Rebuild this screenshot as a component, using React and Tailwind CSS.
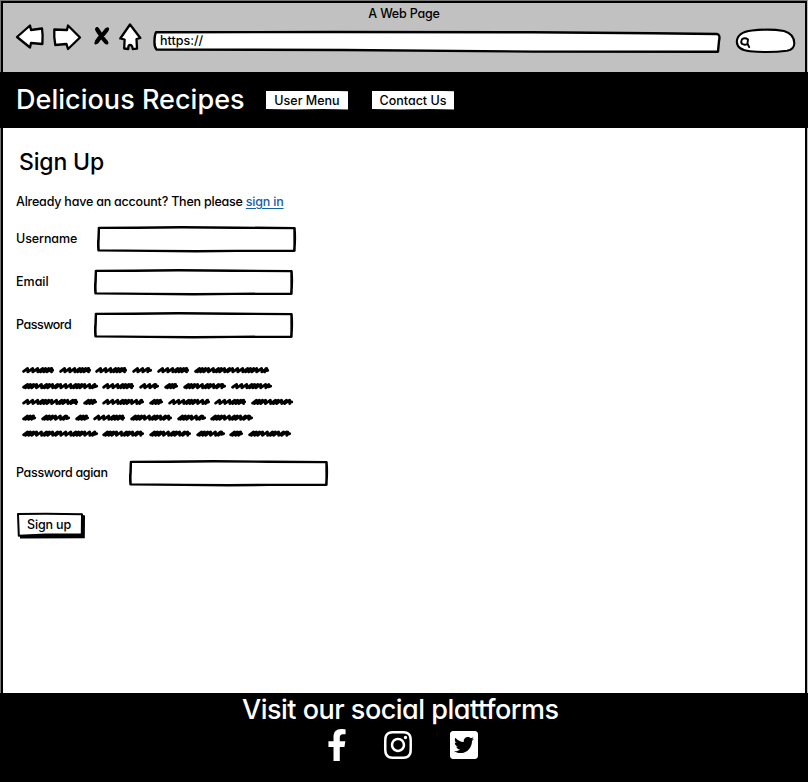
import { FaFacebookF, FaInstagram, FaTwitterSquare } from "react-icons/fa";

const LINES = [
  [[0, 32, 0], [37, 69, 0], [73, 105, 0], [110, 130, 0], [135, 167, 0], [172, 247, 1]],
  [[0, 76, 1], [80, 112, 0], [117, 137, 0], [142, 156, 1], [161, 204, 1], [209, 250, 0]],
  [[0, 56, 0], [61, 75, 1], [80, 122, 0], [127, 141, 1], [146, 188, 0], [192, 224, 0], [229, 271, 1]],
  [[0, 14, 1], [19, 48, 1], [53, 67, 1], [71, 103, 0], [108, 150, 1], [155, 184, 1], [188, 231, 1]],
  [[0, 76, 1], [80, 122, 1], [127, 169, 1], [174, 203, 1], [207, 221, 1], [226, 269, 1]],
];

const STEPS = [5.2, 5, 5, 2.8, 3.2, 3, 4.8, 5.2, 2.8, 3.2, 5, 3];

function scribble([start, end, dense], y) {
  let x = start + 1.6;
  let i = dense ? 3 : 0;
  let d = `M${x} ${y + 1}`;
  while (x < end - 6) {
    const step = STEPS[i % STEPS.length];
    d += `L${(x + 4).toFixed(1)} ${(y - 1.9).toFixed(1)}L${(x + step - 1).toFixed(1)} ${(y + 1.5).toFixed(1)}`;
    x += step;
    i += 1;
  }
  return `${d}L${end - 3.2} ${y - 1.7}L${end - 3.6} ${y + 0.6}L${end - 1.3} ${y - 0.1}`;
}

function Field({ label, gap }) {
  return (
    <label className="flex h-[43px] items-center">
      <span className={gap}>{label}</span>
      <svg width="200" height="28" viewBox="0.5 0.7 200 28" fill="none" stroke="#000" strokeLinejoin="round" strokeLinecap="round">
        <path strokeWidth="2.4" d="M2.4 2.6L40 2.4L85 2L140 2.4L198 2.8Q199 14 197.7 25.4L140 25.6L100 26L55 25.6L2 25.1Q1.3 18 2 13Z" />
        <path strokeWidth="1.4" d="M2.8 2.8Q1.9 12 2.3 24.6M198 2.8Q197.2 13 198.3 25.6" />
      </svg>
    </label>
  );
}

function NavButton({ children }) {
  return (
    <button className="h-[19px] w-[82px] bg-white text-[12.5px] font-medium leading-[19px] text-black [clip-path:polygon(0_0,30%_2%,60%_0,100%_4%,100%_100%,70%_97%,35%_100%,0_98%)]">
      {children}
    </button>
  );
}

export default function App() {
  return (
    <div className="flex h-[782px] w-[808px] flex-col overflow-hidden bg-white font-['Inter','Liberation_Sans',sans-serif] text-[12.5px] font-medium text-black [font-feature-settings:'cv11']">
      <header className="h-[72px] border-t border-r border-l border-t-[#777] border-r-[#bbb] border-l-[#777]">
        <div className="h-[71px] border-2 border-b-0 border-black bg-[#c1c1c1]">
          <div className="h-[20px] pt-[1px] text-center leading-[20px] tracking-[-0.2px]">A Web Page</div>
          <div className="flex h-[38px] items-center">
            <svg className="ml-[11px] shrink-0" width="102" height="38" viewBox="14 23 102 38" fill="#fff" stroke="#000" strokeWidth="2.3" strokeLinejoin="round" strokeLinecap="round" aria-label="Back, forward, stop">
              <path d="M17 37L30 25.5L31 30L42 28.5L42.6 35L42.4 44L31 43L30 47.5Z" />
              <path d="M54.3 29.5L67 30L68 25.5L80 37.5L68 49L66.5 44L55.3 45Q53.8 37 54.3 29.5Z" />
              <g fill="none" strokeWidth="3">
                <path d="M96.8 28.6Q99 35 107 43M107.6 28.8Q101 35 95.8 43" />
                <path strokeWidth="4.2" d="M97.2 29.5L99.8 33.5M106.6 30L103.5 34M97 41.5L99.5 38M106 42L103 38.5" />
              </g>
            </svg>
            <svg className="shrink-0" width="26" height="38" viewBox="116 23 26 38" fill="#fff" stroke="#000" strokeWidth="2.3" strokeLinejoin="round" aria-label="Home">
              <path d="M130 24.5L140.3 38L136.5 39L137 48.7L132.8 49L132 46Q130 44 128.5 46L128.3 49L124.2 48.5L124.6 39.5L120.3 38.5Z" />
            </svg>
            <div className="-mt-[3px] ml-[11px] grid h-[24px] w-[568px] shrink-0">
              <svg className="col-start-1 row-start-1" width="568" height="24" viewBox="0 0 568 24" fill="#fff" stroke="#000" strokeWidth="2.4" strokeLinejoin="round">
                <path d="M3 3.2L180 3L380 3.3L500 4.2L564 5Q567.5 5.5 566 12L565 22.7L380 22.6L190 21L3.5 20.5Q1.2 18 1.5 12Q1.6 6 3 3.2Z" />
              </svg>
              <span className="col-start-1 row-start-1 pl-[7px] leading-[24px]">https://</span>
            </div>
            <svg className="-mt-[2px] ml-[13px] shrink-0" width="62" height="28" viewBox="734 27 62 28" fill="#fff" stroke="#000" strokeWidth="2.1" strokeLinecap="round">
              <path d="M752 30.5Q770 28.5 784 31Q794 34 794.3 43Q794.5 49.5 787 50.8Q770 53 750 51.3Q737 50 736.8 41.5Q737.5 32 752 30.5Z" />
              <path strokeWidth="1.9" d="M748 39.5Q745 37.2 742 39.2Q740.6 41.5 741.8 43.8Q744.6 45.6 747.4 44L748 39.5M747.6 44L749.2 47.2" />
            </svg>
          </div>
        </div>
      </header>

      <nav className="flex h-[56px] items-center bg-black pl-[16px] text-white">
        <h1 className="w-[250px] whitespace-nowrap text-[27px] font-medium leading-[32px] tracking-[0.03px]">Delicious Recipes</h1>
        <NavButton>User Menu</NavButton>
        <span className="w-[24px]" />
        <NavButton>Contact Us</NavButton>
      </nav>

      <main className="grid h-[565px] grid-cols-[1fr_1px] border-l border-l-[#777]">
        <div className="border-x-2 border-black pl-[13px]">
          <h2 className="ml-[3px] mt-[17px] h-[34px] text-[23px] font-medium leading-[34px] tracking-[-0.15px]">Sign Up</h2>
          <p className="mt-[13px] h-[20px] leading-[20px] tracking-[-0.21px]">
            Already have an account? Then please <a className="text-[#1460a8] underline underline-offset-2">sign in</a>
          </p>
          <form className="mt-[6px]">
            <Field label="Username" gap="w-[81px] tracking-[-0.1px]" />
            <Field label="Email" gap="w-[78px]" />
            <Field label="Password" gap="w-[78px] tracking-[-0.5px]" />
            <svg className="ml-[6px] mt-[18px]" width="274" height="76" viewBox="0 0 274 76" fill="none" stroke="#000" strokeWidth="2.8" strokeLinejoin="round" strokeLinecap="round">
              {LINES.map((line, row) => line.map((word) => <path key={`${row}-${word[0]}`} d={scribble(word, 5.4 + row * 15.85)} />))}
            </svg>
            <div className="mt-[11px]">
              <Field label="Password agian" gap="w-[113px] tracking-[-0.34px]" />
            </div>
            <button type="button" className="mt-[17px] grid h-[28px] w-[70px]">
              <svg className="col-start-1 row-start-1" width="70" height="28" viewBox="0 0 70 28">
                <path d="M4 5L66 2.7L69 3.5L68.8 26.3L4 26.6Z" />
                <path d="M2 2L30 1.8L66 2.3L65.8 22.6L30 22.6L2.8 23.8Z" fill="#fff" stroke="#000" strokeWidth="2" strokeLinejoin="round" />
              </svg>
              <span className="col-start-1 row-start-1 pr-[4px] text-center leading-[25px] tracking-[-0.15px]">Sign up</span>
            </button>
          </form>
        </div>
        <div className="bg-[#bbb]" />
      </main>

      <footer className="h-[89px] bg-black text-white">
        <div className="ml-[242px] h-[34px] whitespace-nowrap text-[27px] leading-[34px] tracking-[-0.5px]">Visit our social plattforms</div>
        <div className="flex gap-[34px] pl-[321px] pt-[2px]">
          <FaFacebookF size={32} />
          <FaInstagram className="-ml-[5px]" size={32} />
          <FaTwitterSquare size={32} />
        </div>
      </footer>
    </div>
  );
}
